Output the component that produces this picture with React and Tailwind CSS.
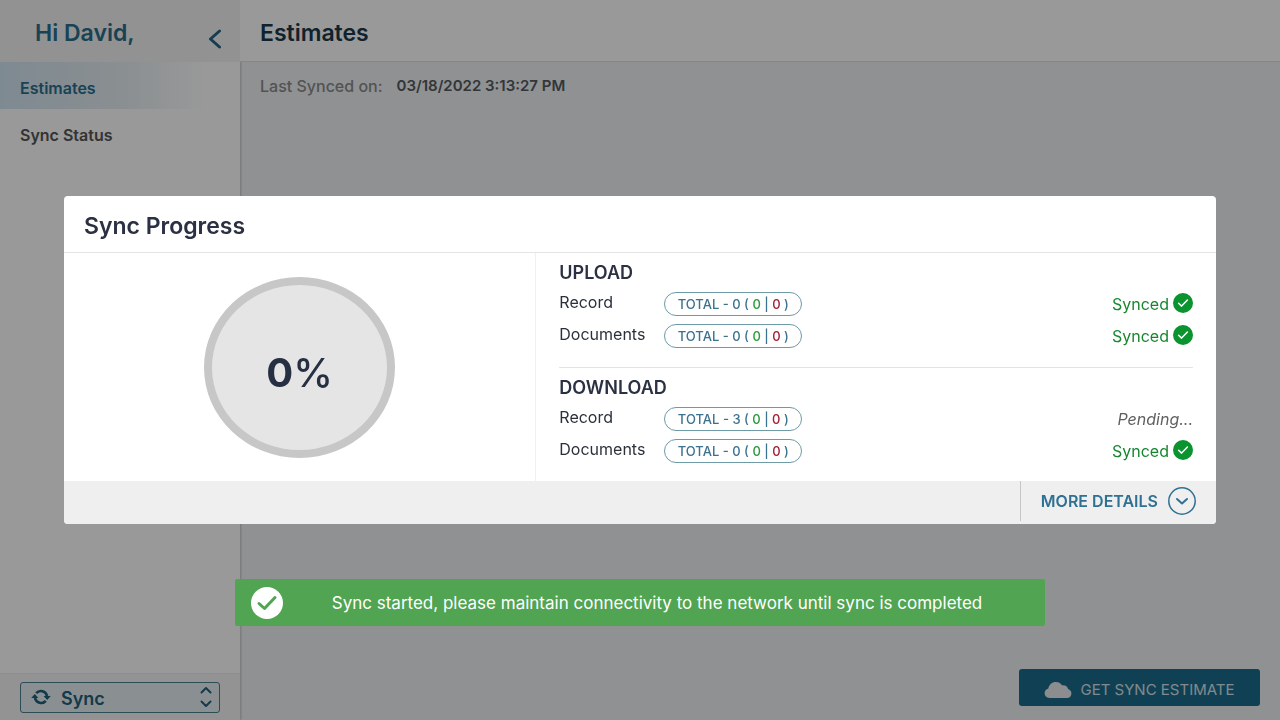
import React from "react";

const CheckDisc = ({ className, mark, width }) => (
  <svg viewBox="0 0 20 20" className={className} aria-hidden="true">
    <circle cx="10" cy="10" r="10" fill="currentColor" />
    <path d={mark} fill="none" stroke="#fff" strokeWidth={width} strokeLinecap="round" strokeLinejoin="round" />
  </svg>
);

function StatusRow({ label, total, status }) {
  return (
    <div className="flex h-8 items-center">
      <span className="w-[105px] pb-1 text-[16px] leading-5 text-[#2b313c]">{label}</span>
      <span className="flex h-6 w-[138px] items-center justify-center whitespace-pre rounded-full border border-[#6d9ba5] text-[13px] font-medium leading-5 text-[#3b738f]">
        TOTAL - {total} ( <span className="text-[#2a9a3c]">0</span> | <span className="text-[#a32035]">0</span> )
      </span>
      <span className="ml-auto flex items-center gap-1">
        {status === "Synced" ? (
          <>
            <span className="text-[16px] leading-5 text-[#17872f]">Synced</span>
            <CheckDisc className="mb-[2px] size-5 text-[#0a932f]" mark="M5.600 10.300l3 2.800 5.800-6" width="1.500" />
          </>
        ) : (
          <span className="text-[16px] italic leading-5 text-[#606060]">{status}</span>
        )}
      </span>
    </div>
  );
}

function Section({ title, children }) {
  return (
    <section className="pt-2">
      <h3 className="mb-[3px] text-[18px] font-semibold leading-6 text-[#2b3142]">{title}</h3>
      {children}
    </section>
  );
}

function Sidebar() {
  return (
    <aside className="flex w-60 shrink-0 flex-col bg-white shadow-[1px_0_2px_rgba(0,0,0,0.2)]">
      <div className="flex h-[62px] items-center justify-between bg-[#f3f3f3] pl-[35px] pr-[18px] pt-1">
        <span className="text-[23px] font-semibold leading-7 text-[#2b6f8c]">Hi David,</span>
        <button type="button" aria-label="Collapse menu" className="mt-3 text-[#22668a]">
          <svg viewBox="0 0 14 20" className="h-5 w-[14px]" aria-hidden="true">
            <path d="M11.500 2L2.500 10l9 8" fill="none" stroke="currentColor" strokeWidth="3" strokeLinecap="round" strokeLinejoin="round" />
          </svg>
        </button>
      </div>
      <nav className="flex flex-1 flex-col text-[16px] font-semibold leading-6">
        <a href="#estimates" className="flex h-[47px] items-center bg-linear-to-r from-[#d3e6f3] via-[#e6eef2] via-50% to-white to-85% pl-5 pt-1 text-[#2b6f8c]">Estimates</a>
        <a href="#status" className="flex h-[47px] items-center pl-5 pt-1 text-[#555]">Sync Status</a>
      </nav>
      <div className="flex h-[47px] items-center border-t border-[#ededed] bg-[#f5f5f5] px-5">
        <label className="flex h-[31px] w-full items-center rounded-[3px] border border-[#4b8090] bg-[#e6f0f4] pl-2.5 pr-[7px] text-[#22607a]">
          <svg viewBox="0 0 20 16" className="h-4 w-5" fill="none" stroke="currentColor" strokeWidth="2.600" aria-hidden="true">
            <path d="M5.200 4.200A6.200 6.200 0 0 1 16 7" />
            <path d="M14.800 11.800A6.200 6.200 0 0 1 4 9" />
            <path d="M12.600 7H19.800L16.200 11zM7.400 9H.2L3.800 5z" fill="currentColor" stroke="none" />
          </svg>
          <select aria-label="Sync action" className="min-w-0 flex-1 appearance-none bg-transparent pl-2.5 pt-[3px] text-[18px] font-semibold leading-6">
            <option>Sync</option>
          </select>
          <svg viewBox="0 0 12 22" className="h-[22px] w-3" fill="none" stroke="currentColor" strokeWidth="2" strokeLinecap="round" strokeLinejoin="round" aria-hidden="true">
            <path d="M1.500 6.500L6 2l4.500 4.500M1.500 15.500L6 20l4.500-4.500" />
          </svg>
        </label>
      </div>
    </aside>
  );
}

export default function App() {
  return (
    <div className="flex min-h-screen bg-[#eff2f4] font-['Inter','Liberation_Sans',sans-serif]">
      <Sidebar />
      <main className="flex min-w-0 flex-1 flex-col">
        <header className="flex h-[62px] items-center border-b border-[#dfdfdf] bg-white px-5 pt-1">
          <h1 className="text-[23px] font-semibold leading-7 text-[#193a4b]">Estimates</h1>
        </header>
        <p className="flex gap-3.5 px-5 pt-3 leading-6">
          <span className="text-[16px] font-medium text-[#8a8a8a]">Last Synced on:</span>
          <span className="text-[15px] font-semibold text-[#555b60]">03/18/2022 3:13:27 PM</span>
        </p>
        <div className="mt-auto flex justify-end px-5 pb-3.5">
          <button type="button" className="flex h-[37px] w-[241px] items-center justify-center gap-2 rounded-[3px] bg-[#1c6c8c] pt-1 text-[15px] leading-5 text-[#d9e4e9]">
            <svg viewBox="0 0 28 16" className="h-4 w-7" fill="#e8ecee" aria-hidden="true">
              <path d="M5.500 16C2.400 16 .6 13.900 .6 11.300c0-2.400 1.400-4.300 3.700-4.900C5.200 2.700 8 0 11.700 0c2.900 0 5 1.200 6.300 3.300 3-.6 5.500 1 6.100 3.800 2 .6 3.300 2.300 3.300 4.300 0 2.700-1.700 4.600-4.500 4.600z" />
            </svg>
            GET SYNC ESTIMATE
          </button>
        </div>
      </main>

      <div className="fixed inset-0 flex items-center justify-center bg-black/40">
        <div role="dialog" aria-labelledby="sync-title" className="w-[90%] overflow-hidden rounded bg-white">
          <h2 id="sync-title" className="border-b border-[#e4e4e4] px-5 pb-3 pt-4 text-[23px] font-semibold leading-7 text-[#2b3142]">Sync Progress</h2>
          <div className="flex">
            <div className="flex w-[41%] items-center justify-center border-r border-[#f0f0f0]">
              <div className="flex h-[181px] w-[191px] items-center justify-center rounded-[50%] border-8 border-[#c7c7c7] bg-[#e5e5e5] pt-3 text-[40px] leading-none text-[#273042]">
                <span className="font-bold">0</span>
                <span className="font-medium">%</span>
              </div>
            </div>
            <div className="flex-1 pb-[14px] pl-[23px] pr-[23px]">
              <div className="border-b border-[#e4e4e4] pb-[15px]">
                <Section title="UPLOAD">
                  <StatusRow label="Record" total="0" status="Synced" />
                  <StatusRow label="Documents" total="0" status="Synced" />
                </Section>
              </div>
              <Section title="DOWNLOAD">
                <StatusRow label="Record" total="3" status="Pending..." />
                <StatusRow label="Documents" total="0" status="Synced" />
              </Section>
            </div>
          </div>
          <div className="flex h-[43px] items-start justify-end bg-[#efefef] pr-5">
            <button type="button" className="flex h-10 items-center gap-2.5 border-l border-[#c6c6c6] pl-5 text-[16px] font-semibold leading-6 text-[#2f7193]">
              MORE DETAILS
              <svg viewBox="0 0 28 28" className="size-7" fill="none" stroke="currentColor" strokeLinecap="round" strokeLinejoin="round" aria-hidden="true">
                <circle cx="14" cy="14" r="13.200" strokeWidth="1.500" />
                <path d="M9 12l5 4.500 5-4.500" strokeWidth="2" />
              </svg>
            </button>
          </div>
        </div>
      </div>

      <div className="pointer-events-none fixed inset-x-0 bottom-[94px] flex justify-center">
        <div role="status" className="flex h-[47px] w-[810px] items-center rounded-[2px] bg-[#51a451] pl-4 pr-3.5">
          <svg viewBox="0 0 32 32" className="size-8" aria-hidden="true">
            <circle cx="16" cy="16" r="16" fill="#fff" />
            <path d="M8 16.500l5.500 5L24 10.500" fill="none" stroke="#51a451" strokeWidth="3" strokeLinecap="round" strokeLinejoin="round" />
          </svg>
          <p className="flex-1 text-center text-[17px] leading-6 text-white">Sync started, please maintain connectivity to the network until sync is completed</p>
        </div>
      </div>
    </div>
  );
}
